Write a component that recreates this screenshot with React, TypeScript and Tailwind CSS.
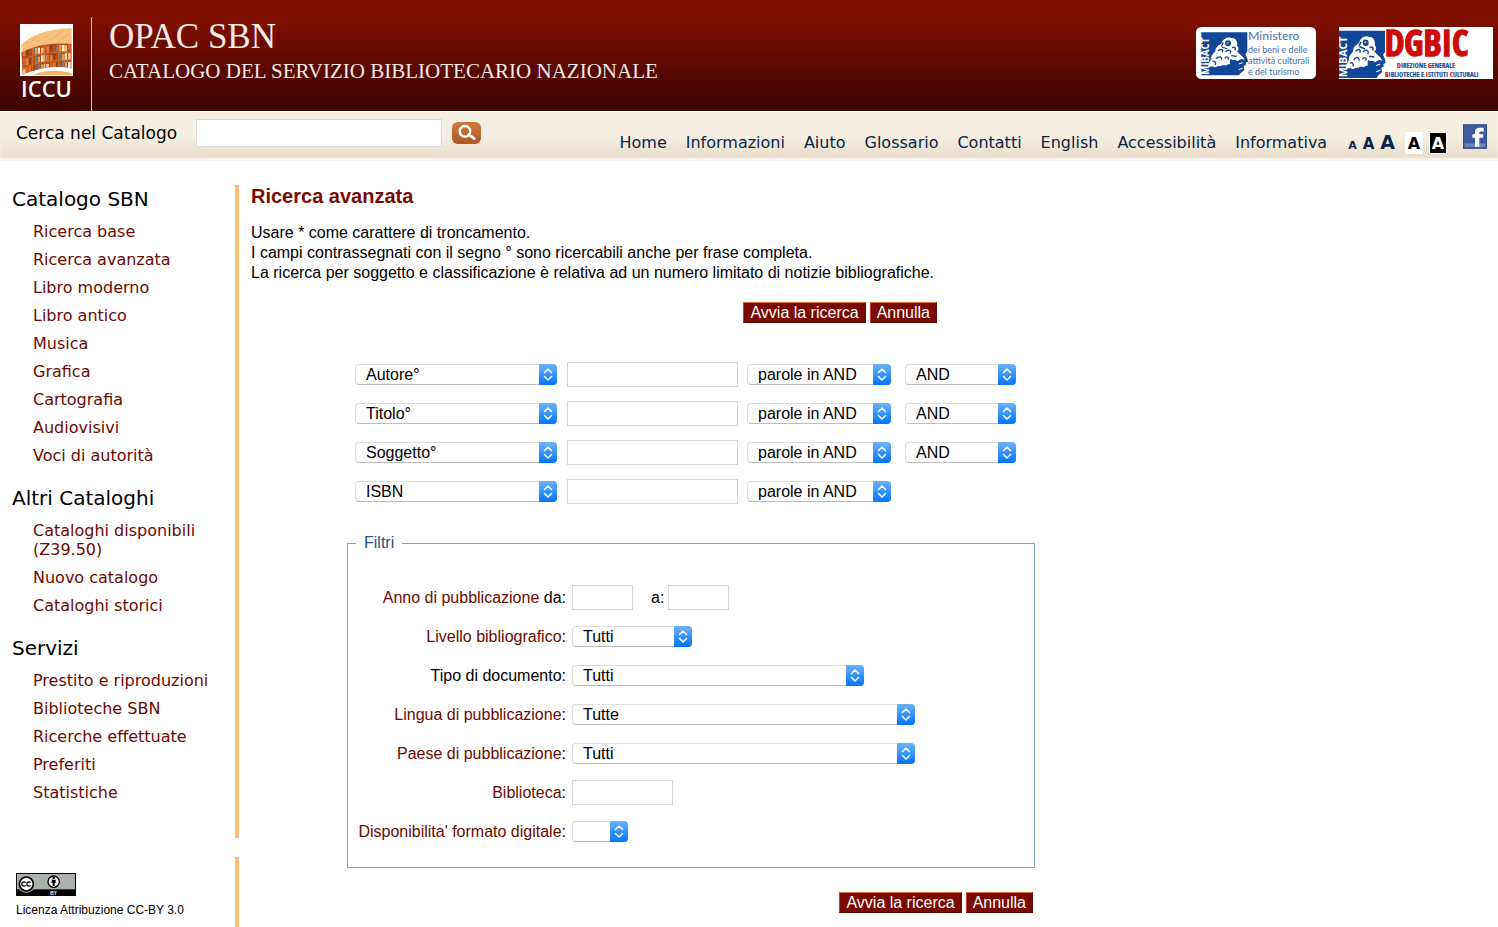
import { useId } from "react";
import type { ReactNode } from "react";

const catalogLinks = [
  "Ricerca base",
  "Ricerca avanzata",
  "Libro moderno",
  "Libro antico",
  "Musica",
  "Grafica",
  "Cartografia",
  "Audiovisivi",
  "Voci di autorità",
];
const otherLinks = ["Cataloghi disponibili (Z39.50)", "Nuovo catalogo", "Cataloghi storici"];
const serviceLinks = [
  "Prestito e riproduzioni",
  "Biblioteche SBN",
  "Ricerche effettuate",
  "Preferiti",
  "Statistiche",
];
const topLinks = [
  "Home",
  "Informazioni",
  "Aiuto",
  "Glossario",
  "Contatti",
  "English",
  "Accessibilità",
  "Informativa",
];
const searchFields = ["Autore°", "Titolo°", "Soggetto°", "ISBN"];

const bookColors = ["#d8672a", "#f09a4c", "#9c4218", "#f6c088", "#6f7f94", "#e07a34", "#fbe6c6", "#b9531f"];

function IccuLogo() {
  const books = [];
  for (let row = 0; row < 4; row++) {
    for (let i = 0; i < 18; i++) {
      const x = i * 9;
      const y = 78 + row * 26 - Math.round(18 * Math.sin((i / 18) * 1.6));
      books.push(
        <rect
          key={`${row}-${i}`}
          x={x}
          y={y + ((i * 5 + row) % 4)}
          width={i % 3 === 0 ? 6 : 8}
          height="20"
          fill={bookColors[(i * 5 + row * 3) % 8]}
        />,
      );
    }
  }
  return (
    <svg viewBox="0 0 159 156" className="h-[52px] w-[53px]" aria-hidden="true">
      <rect width="159" height="156" fill="#fff" />
      <path d="M4 84V62C30 36 80 14 155 12V62C100 56 50 62 4 90Z" fill="#f6c27c" />
      <path d="M20 58 60 38M50 54 95 28M85 50 130 22M115 52 150 28" stroke="#eeb063" strokeWidth="3" />
      <clipPath id="shelf">
        <path d="M4 86C50 62 100 56 155 60V134C115 122 60 130 8 152Z" />
      </clipPath>
      <g clipPath="url(#shelf)">
        <rect width="159" height="156" fill="#a94a1c" />
        {books}
        <path
          d="M0 112C50 84 100 80 159 86M4 138C50 110 100 106 159 112M38 62V150M76 54V150M116 52V150"
          fill="none"
          stroke="#cf6826"
          strokeWidth="4"
        />
      </g>
      <path d="M40 152C75 136 120 138 155 148V153H40Z" fill="#f3b264" />
    </svg>
  );
}

function Profile() {
  return (
    <g>
      <path
        d="M0 0H138V58L132 66 138 78 140 88 133 91 134 98 127 101 129 112C126 119 118 117 114 129H0Z"
        fill="#114796"
      />
      <path
        d="M22 104C18 92 28 88 30 78 28 68 38 64 42 56 42 44 52 38 60 34 64 20 78 12 90 17 104 16 110 28 107 40 114 46 112 54 106 57 112 64 124 70 130 82L120 80 108 86C102 80 96 86 88 80 82 88 92 98 80 96 74 104 64 94 58 102 48 98 42 110 34 102Z"
        fill="#fff"
      />
      <path
        d="M50 56C58 48 68 52 62 60M44 80C52 70 62 72 60 82M72 58C82 50 92 54 86 64M92 46C100 42 106 48 100 54M70 78C76 70 84 74 80 82M34 88C42 86 44 92 42 98M62 44 78 50M90 70 106 72M66 30 60 42"
        fill="none"
        stroke="#114796"
        strokeWidth="4"
      />
      <circle cx="80" cy="33" r="9" fill="#114796" />
      <path d="M76 34 82 30" stroke="#fff" strokeWidth="3" />
      <path d="M112 95 124 91M112 112 124 108" stroke="#fff" strokeWidth="3" />
      <text
        transform="translate(24 127) rotate(-90)"
        fontSize="29"
        fontWeight="700"
        fill="#fff"
        className="font-['Open_Sans',sans-serif]"
      >
        MiBACT
      </text>
    </g>
  );
}

function MinistryLogo() {
  return (
    <svg viewBox="0 0 360 156" className="h-[52px] w-[120px]" role="img" aria-label="Ministero">
      <rect width="360" height="156" rx="16" fill="#fff" />
      <g transform="translate(16 16)">
        <Profile />
      </g>
      <g fill="#4a6fae" className="font-[Lato,sans-serif]">
        <text x="156" y="40" fontSize="37">Ministero</text>
        <text x="156" y="77" fontSize="27">dei beni e delle</text>
        <text x="156" y="111" fontSize="27">attività culturali</text>
        <text x="156" y="145" fontSize="27">e del turismo</text>
      </g>
    </svg>
  );
}

function DgbicLogo() {
  return (
    <svg viewBox="0 0 462 156" className="h-[52px] w-[154px]" role="img" aria-label="DGBIC">
      <rect width="462" height="156" fill="#fff" />
      <g transform="translate(0 11) scale(1 1.1)">
        <Profile />
      </g>
      <text
        x="137"
        y="88"
        fontSize="106"
        fontWeight="300"
        fill="#cf0a0a"
        stroke="#cf0a0a"
        strokeWidth="4"
        className="font-['Open_Sans_Condensed','Liberation_Sans_Narrow','Roboto_Condensed',Lato,sans-serif]"
      >
        DGBIC
      </text>
      <g
        fontSize="21"
        fontWeight="300"
        fill="#1d4f9b"
        stroke="#1d4f9b"
        strokeWidth="0.5"
        className="font-['Open_Sans_Condensed','Liberation_Sans_Narrow','Roboto_Condensed',Lato,sans-serif]"
      >
        <text x="174" y="124">
          <tspan fill="#cf0a0a" stroke="#cf0a0a">D</tspan>IREZIONE{" "}
          <tspan fill="#cf0a0a" stroke="#cf0a0a">G</tspan>ENERALE
        </text>
        <text x="138" y="151">
          <tspan fill="#cf0a0a" stroke="#cf0a0a">B</tspan>IBLIOTECHE E{" "}
          <tspan fill="#cf0a0a" stroke="#cf0a0a">I</tspan>STITUTI{" "}
          <tspan fill="#cf0a0a" stroke="#cf0a0a">C</tspan>ULTURALI
        </text>
      </g>
    </svg>
  );
}

function CcBadge() {
  return (
    <svg viewBox="0 0 180 69" className="h-[23px] w-[60px]" role="img" aria-label="Creative Commons BY">
      <rect width="180" height="69" fill="#000" />
      <rect x="3" y="3" width="174" height="46" fill="#aab2ab" />
      <circle cx="31" cy="33" r="26" fill="#aab2ab" />
      <circle cx="31" cy="33" r="21" fill="#fff" stroke="#000" strokeWidth="5" />
      <path
        d="M29 29a6.500 6.500 0 1 0 0 8M44 29a6.500 6.500 0 1 0 0 8"
        fill="none"
        stroke="#000"
        strokeWidth="4"
      />
      <circle cx="113" cy="26" r="17" fill="#fff" stroke="#000" strokeWidth="4" />
      <circle cx="113" cy="15" r="4" />
      <path d="M107 20h12v10h-3v9h-6v-9h-3z" />
      <text x="103" y="65" fontSize="14" fontWeight="700" fill="#fff" className="font-['Liberation_Sans',sans-serif]">
        BY
      </text>
    </svg>
  );
}

function SearchIcon() {
  return (
    <svg viewBox="0 0 87 66" className="h-[22px] w-[29px]" aria-hidden="true">
      <defs>
        <linearGradient id="copper" x1="0" y1="0" x2="0" y2="1">
          <stop offset="0" stopColor="#cf7b40" />
          <stop offset="1" stopColor="#ae5725" />
        </linearGradient>
      </defs>
      <rect width="87" height="66" rx="17" fill="url(#copper)" />
      <circle cx="39" cy="28" r="16" fill="none" stroke="#fff" strokeWidth="7" />
      <path d="M51 38 67 50" stroke="#fff" strokeWidth="8" strokeLinecap="round" />
    </svg>
  );
}

function FacebookIcon() {
  return (
    <svg viewBox="0 0 72 74" className="h-[25px] w-6" aria-hidden="true">
      <rect width="72" height="74" fill="#2c4a89" />
      <rect x="3" y="3" width="66" height="68" fill="#3d5c9f" />
      <rect x="5" y="58" width="62" height="10" fill="#7088bb" />
      <path d="M36 68V41H28V30H36V24C36 14 43 11 51 11H62V22H55C51 22 49 23 49 27V30H61L60 41H49V68Z" fill="#fff" />
    </svg>
  );
}

type SelectProps = { id?: string; label?: string; value: string; className: string };

function Select({ id, label, value, className }: SelectProps) {
  const gradient = useId();
  return (
    <span className={`relative inline-block h-[21px] max-w-full ${className}`}>
      <select
        id={id}
        aria-label={label}
        className="block h-[21px] w-full appearance-none rounded-[4px] border border-[#dedede] border-b-[#bdbdbd] bg-white pr-5 pl-[10px] text-base leading-[19px] text-black"
      >
        <option>{value}</option>
      </select>
      <svg viewBox="0 0 18 21" className="pointer-events-none absolute top-0 right-0 h-[21px] w-[18px]" aria-hidden="true">
        <defs>
          <linearGradient id={gradient} x1="0" y1="0" x2="0" y2="1">
            <stop offset="0" stopColor="#6bb3fa" />
            <stop offset="1" stopColor="#0375fd" />
          </linearGradient>
        </defs>
        <path d="M0 0H14A4 4 0 0 1 18 4V17A4 4 0 0 1 14 21H0Z" fill={`url(#${gradient})`} />
        <path
          d="M5.500 8.500 9 5 12.500 8.500M5.500 12.500 9 16 12.500 12.500"
          fill="none"
          stroke="#fff"
          strokeWidth="1.500"
          strokeLinecap="round"
          strokeLinejoin="round"
        />
      </svg>
    </span>
  );
}

function FormButtons() {
  const style =
    "h-[21px] border border-[#5c0a00] border-t-[#e0703c] border-l-[#c8402c] bg-[#7a0900] px-[6px] text-base leading-[19px] text-white";
  return (
    <div className="flex justify-end gap-1">
      <button type="submit" className={style}>Avvia la ricerca</button>
      <button type="reset" className={style}>Annulla</button>
    </div>
  );
}

function SideSection({ title, links }: { title: string; links: string[] }) {
  return (
    <section>
      <h2 className="text-xl leading-6 text-black">{title}</h2>
      <ul className="mt-[11px] flex flex-col gap-[9px] pl-[21px]">
        {links.map((link) => (
          <li key={link} className="pr-6 leading-[19px]">
            <a href="#" className="text-[#6b0a00]">{link}</a>
          </li>
        ))}
      </ul>
    </section>
  );
}

const boxStyle = "h-[25px] max-w-full border border-[#d4d4d4] bg-white px-1";

function FilterRow({ id, label, plain, children }: { id: string; label: string; plain?: string; children: ReactNode }) {
  return (
    <div className="grid min-h-[25px] grid-cols-[210px_minmax(0,1fr)] items-center gap-[6px]">
      <label htmlFor={id} className="text-right whitespace-nowrap text-black">
        {label && <a href="#" className="text-[#6b0a00]">{label}</a>}
        {plain}
      </label>
      <div className="flex items-center">{children}</div>
    </div>
  );
}

export default function App() {
  return (
    <div className="flex min-h-screen flex-col bg-white font-['Liberation_Sans',Arial,sans-serif] text-base text-black">
      <header className="flex h-[111px] justify-between bg-linear-to-b from-[#7d0e00] from-20% to-[#3c0400] pr-[5px] pl-5">
        <div className="flex">
          <div className="flex w-[53px] flex-col items-center pt-6">
            <IccuLogo />
            <span className="text-[22px] leading-6 font-semibold text-white font-['Open_Sans',sans-serif]">ICCU</span>
          </div>
          <div className="mt-[17px] ml-[18px] border-l border-[#d8c0bb] pl-[17px] text-[#f4e9e4] font-['Liberation_Serif',serif]">
            <h1 className="text-[35px] leading-10">OPAC SBN</h1>
            <p className="text-[21px] leading-7">CATALOGO DEL SERVIZIO BIBLIOTECARIO NAZIONALE</p>
          </div>
        </div>
        <div className="flex items-start gap-[23px] pt-[27px]">
          <MinistryLogo />
          <DgbicLogo />
        </div>
      </header>

      <div className="flex h-[50px] items-start border-t border-white bg-linear-to-b from-[#f4efe2] from-50% to-[#e6dcc6] pr-[11px] pl-4 font-['DejaVu_Sans',Verdana,sans-serif] shadow-[inset_0_-3px_2px_#faf6ee]">
        <form className="flex items-center pt-[7px]" onSubmit={(e) => e.preventDefault()}>
          <label htmlFor="q" className="w-[180px] text-[17px] leading-7 whitespace-nowrap">Cerca nel Catalogo</label>
          <input id="q" type="text" className="h-7 w-[246px] border border-[#d9d9e0] bg-white px-2" />
          <button type="submit" aria-label="Cerca" className="ml-[10px]"><SearchIcon /></button>
        </form>
        <nav className="ml-auto flex items-center gap-[19px] pt-5 leading-[22px] whitespace-nowrap text-[#0b2447]">
          {topLinks.map((link) => (
            <a key={link} href="#">{link}</a>
          ))}
        </nav>
        <div className="flex items-baseline gap-[6px] pt-[19px] pl-[21px] leading-[22px] font-bold text-[#0b2447]">
          <button type="button" className="text-[11px]">A</button>
          <button type="button" className="text-[15px]">A</button>
          <button type="button" className="text-[19px]">A</button>
        </div>
        <div className="flex gap-[6px] pt-5 pl-[10px] text-base leading-[21px] font-bold">
          <button type="button" className="h-[22px] w-[18px] bg-white text-black">A</button>
          <button type="button" className="h-[22px] w-[18px] border border-white bg-black text-white">A</button>
        </div>
        <a href="#" aria-label="Facebook" className="pt-[12px] pl-[16px]"><FacebookIcon /></a>
      </div>

      <div className="flex flex-1 items-stretch pt-6">
        <aside className="flex w-[239px] shrink-0 flex-col gap-[19px]">
          <nav className="flex flex-col gap-[21px] border-r-4 border-[#f5c177] pt-[2px] pb-9 pl-3 font-['DejaVu_Sans',Verdana,sans-serif]">
            <SideSection title="Catalogo SBN" links={catalogLinks} />
            <SideSection title="Altri Cataloghi" links={otherLinks} />
            <SideSection title="Servizi" links={serviceLinks} />
          </nav>
          <div className="flex-1 border-r-4 border-[#f5c177] pt-4 pl-4">
            <CcBadge />
            <p className="mt-[6px] text-xs leading-4">Licenza Attribuzione CC-BY 3.0</p>
          </div>
        </aside>

        <main className="min-w-0 flex-1 px-3">
          <h2 className="text-xl leading-[22px] font-bold text-[#7a0900]">Ricerca avanzata</h2>
          <p className="mt-4 leading-5">
            Usare * come carattere di troncamento.
            <br />
            I campi contrassegnati con il segno ° sono ricercabili anche per frase completa.
            <br />
            La ricerca per soggetto e classificazione è relativa ad un numero limitato di notizie bibliografiche.
          </p>

          <form className="mt-[19px] ml-24 max-w-[688px]" onSubmit={(e) => e.preventDefault()}>
            <div className="pr-[98px]">
              <FormButtons />
            </div>

            <div className="mt-[39px] flex flex-col gap-[14px] pl-2">
              {searchFields.map((field, i) => (
                <div key={field} className="flex h-[25px] items-center">
                  <Select label="Campo" value={field} className="w-[202px]" />
                  <input type="text" aria-label={field} className={`${boxStyle} ml-[10px] w-[171px]`} />
                  <Select label="Parole" value="parole in AND" className="ml-[9px] w-36" />
                  {i < 3 && <Select label="Operatore" value="AND" className="ml-[14px] w-[111px]" />}
                </div>
              ))}
            </div>

            <fieldset className="mt-[30px] border border-[#7f9fc6] px-2 pb-[23px]">
              <legend className="px-2 leading-[18px] text-[#2b5083]">Filtri</legend>
              <div className="mt-[33px] flex flex-col gap-[14px]">
                <FilterRow id="anno" label="Anno di pubblicazione" plain=" da:">
                  <input id="anno" type="text" className={`${boxStyle} w-[61px]`} />
                  <label htmlFor="anno-a" className="pr-1 pl-[18px]">a:</label>
                  <input id="anno-a" type="text" className={`${boxStyle} w-[61px]`} />
                </FilterRow>
                <FilterRow id="livello" label="Livello bibliografico" plain=":">
                  <Select id="livello" value="Tutti" className="w-[120px]" />
                </FilterRow>
                <FilterRow id="tipo" label="" plain="Tipo di documento:">
                  <Select id="tipo" value="Tutti" className="w-[292px]" />
                </FilterRow>
                <FilterRow id="lingua" label="Lingua di pubblicazione" plain=":">
                  <Select id="lingua" value="Tutte" className="w-[343px]" />
                </FilterRow>
                <FilterRow id="paese" label="Paese di pubblicazione" plain=":">
                  <Select id="paese" value="Tutti" className="w-[343px]" />
                </FilterRow>
                <FilterRow id="biblioteca" label="Biblioteca" plain=":">
                  <input id="biblioteca" type="text" className={`${boxStyle} w-[101px]`} />
                </FilterRow>
                <FilterRow id="digitale" label="Disponibilita' formato digitale" plain=":">
                  <Select id="digitale" value="" className="w-14" />
                </FilterRow>
              </div>
            </fieldset>

            <div className="mt-6 pr-[2px]">
              <FormButtons />
            </div>
          </form>
        </main>
      </div>
    </div>
  );
}
